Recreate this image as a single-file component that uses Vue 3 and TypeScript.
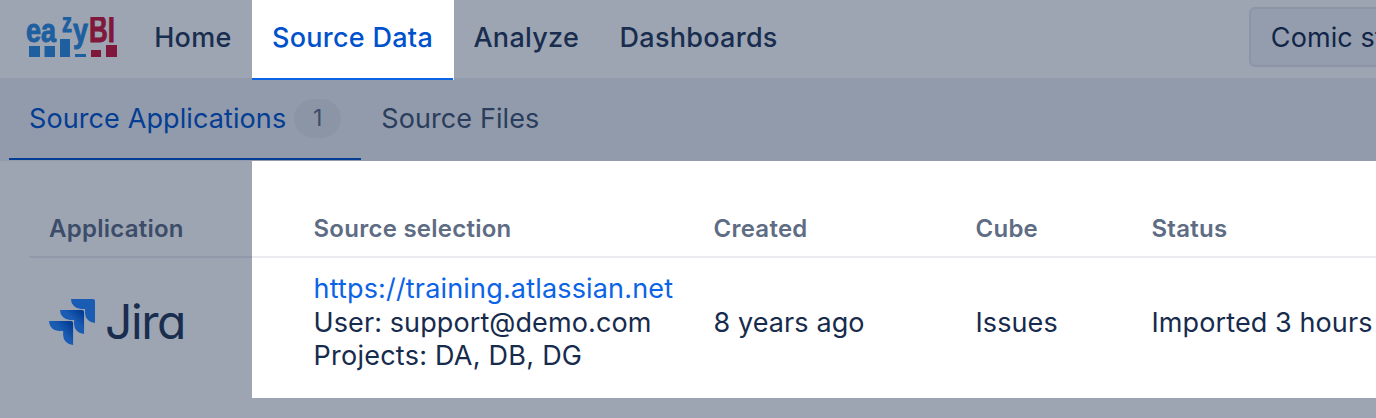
<script setup lang="ts">
const navItems = ['Home', 'Source Data', 'Analyze', 'Dashboards']
const columns = ['Application', 'Source selection', 'Created', 'Cube', 'Status']
</script>

<template>
  <div class="page">
    <header class="topbar">
      <svg class="logo" width="92" height="42" viewBox="0 0 92 42" role="img" aria-label="eazyBI">
        <text x="0" y="25" textLength="30" lengthAdjust="spacingAndGlyphs" class="logo-text blue">ea</text>
        <text x="36" y="15" textLength="10" lengthAdjust="spacingAndGlyphs" class="logo-text blue small">z</text>
        <text x="47" y="25" textLength="15" lengthAdjust="spacingAndGlyphs" class="logo-text blue">y</text>
        <text x="63" y="25" textLength="26" lengthAdjust="spacingAndGlyphs" class="logo-text red big">BI</text>
        <rect x="3" y="29" width="11" height="11" class="blue" />
        <rect x="18.5" y="29" width="10.5" height="11" class="blue" />
        <rect x="34" y="22" width="10" height="18" class="blue" />
        <rect x="49" y="37" width="11" height="3" class="blue" />
        <rect x="65" y="33" width="10" height="7" class="red" />
        <rect x="80" y="28" width="11" height="12" class="red" />
      </svg>
      <nav class="nav">
        <a v-for="item in navItems" :key="item" class="nav-item" :class="{ active: item === 'Source Data' }">{{ item }}</a>
      </nav>
      <button class="account">Comic store</button>
    </header>

    <div class="subnav">
      <a class="subtab active">Source Applications<span class="badge">1</span></a>
      <a class="subtab">Source Files</a>
    </div>

    <section class="table">
      <div v-for="col in columns" :key="col" class="th">{{ col }}</div>
      <div class="td app-cell">
        <svg class="jira-mark" width="46" height="46" viewBox="0 0 24 24">
          <defs>
            <linearGradient id="jira-a" x1="0.98" y1="0.03" x2="0.6" y2="0.43">
              <stop offset="0.18" stop-color="#0052cc" />
              <stop offset="1" stop-color="#2684ff" />
            </linearGradient>
            <linearGradient id="jira-b" x1="1" y1="0.03" x2="0.55" y2="0.45">
              <stop offset="0.18" stop-color="#0052cc" />
              <stop offset="1" stop-color="#2684ff" />
            </linearGradient>
          </defs>
          <path fill="#2684ff" d="M23.013 0H11.455a5.215 5.215 0 0 0 5.215 5.215h2.129v2.057A5.215 5.215 0 0 0 24 12.483V1.005A1.001 1.001 0 0 0 23.013 0Z" />
          <path fill="url(#jira-a)" d="M17.294 5.757H5.736a5.215 5.215 0 0 0 5.215 5.214h2.129v2.058a5.218 5.218 0 0 0 5.215 5.214V6.758a1.001 1.001 0 0 0-1.001-1.001Z" />
          <path fill="url(#jira-b)" d="M11.571 11.513H0a5.218 5.218 0 0 0 5.232 5.215h2.13v2.057A5.215 5.215 0 0 0 12.575 24V12.518a1.005 1.005 0 0 0-1.005-1.005Z" />
        </svg>
        <span class="jira-word">Jira</span>
      </div>
      <div class="td">
        <a class="link">https://training.atlassian.net</a><br />
        User: support@demo.com<br />
        <span class="projects">Projects: DA, DB, DG</span>
      </div>
      <div class="td">8 years ago</div>
      <div class="td">Issues</div>
      <div class="td nowrap">Imported 3 hours ago</div>
    </section>

    <!-- dimmed backdrop of the guided tour, with two cut-outs -->
    <div class="backdrop"></div>
  </div>
</template>

<style>
body {
  margin: 0;
  overflow: hidden;
  background: #fff;
}
</style>

<style scoped>
.page {
  position: relative;
  width: 1376px;
  height: 418px;
  overflow: hidden;
  background: #fff;
  color: #172b4d;
  font-family: Inter, "Liberation Sans", sans-serif;
  font-size: 27px;
  letter-spacing: 0.1px;
}
.topbar {
  display: flex;
  align-items: flex-start;
  height: 78px;
  padding-left: 26px;
}
.logo {
  flex: none;
  margin-top: 17px;
}
.logo-text {
  font-family: "Liberation Sans", sans-serif;
  font-weight: 700;
  font-size: 33px;
  letter-spacing: 0;
}
.logo-text.small {
  font-size: 28px;
}
.logo-text.big {
  font-size: 36px;
}
.blue {
  fill: #2c8ade;
  stroke: #2c8ade;
  stroke-width: 0;
}
.red {
  fill: #ce1438;
  stroke: #ce1438;
  stroke-width: 0;
}
.logo-text.blue,
.logo-text.red {
  stroke-width: 0.9px;
}
.nav {
  display: flex;
  flex: none;
  margin-left: 16px;
}
.nav-item {
  height: 78px;
  padding: 0 20.2px;
  line-height: 75px;
  font-weight: 500;
  letter-spacing: 0.28px;
  color: #253858;
}
.nav-item.active {
  color: #0052cc;
  border-bottom: 2px solid #0b63e5;
}
.account {
  flex: none;
  width: 220px;
  height: 60px;
  margin-top: 7px;
  margin-left: 451px;
  padding: 0 20px;
  border: 2px solid #e1e4ea;
  border-radius: 6px;
  background: #f1f2f5;
  color: #172b4d;
  font: inherit;
  letter-spacing: inherit;
  text-align: left;
  white-space: nowrap;
}
.subnav {
  display: flex;
  height: 83px;
  padding: 0 9px;
  background: #edeff2;
  box-sizing: border-box;
}
.subtab {
  display: flex;
  align-items: center;
  height: 82px;
  padding: 0 20px;
  box-sizing: border-box;
  border-bottom: 2px solid transparent;
  color: #42526e;
}
.subtab.active {
  color: #0052cc;
  border-bottom-color: #0052cc;
}
.badge {
  width: 47px;
  height: 39px;
  margin-left: 8px;
  border-radius: 20px;
  background: #e2e4e9;
  color: #5e6c84;
  font-size: 23px;
  line-height: 39px;
  text-align: center;
}
.table {
  display: grid;
  grid-template-columns: 285px 400px 262px 176px 1fr;
  margin-left: 28.5px;
}
.th {
  height: 97px;
  padding-top: 51px;
  box-sizing: border-box;
  border-bottom: 2px solid #ebecf0;
  color: #5e6c84;
  font-size: 24px;
  font-weight: 600;
  line-height: 34px;
  letter-spacing: 0.25px;
}
.th:first-child,
.app-cell {
  padding-left: 20.5px;
}
.td {
  display: block;
  align-self: center;
  padding-top: 14px;
  line-height: 33.6px;
}
.app-cell {
  display: flex;
  align-items: center;
  gap: 10px;
}
.jira-word {
  font-size: 48px;
  line-height: 46px;
  font-weight: 400;
  font-feature-settings: "cv11";
  letter-spacing: -1.4px;
  color: #253858;
}
.link {
  color: #0b63e5;
  letter-spacing: 0.17px;
}
.projects {
  letter-spacing: 0.25px;
}
.nowrap {
  white-space: nowrap;
}
.backdrop {
  position: absolute;
  inset: 0;
  background: rgba(9, 30, 66, 0.4);
  clip-path: path(evenodd, "M0 0H1376V418H0Z M252 0H454V80H252Z M252 161H1376V398H252Z");
}
</style>
